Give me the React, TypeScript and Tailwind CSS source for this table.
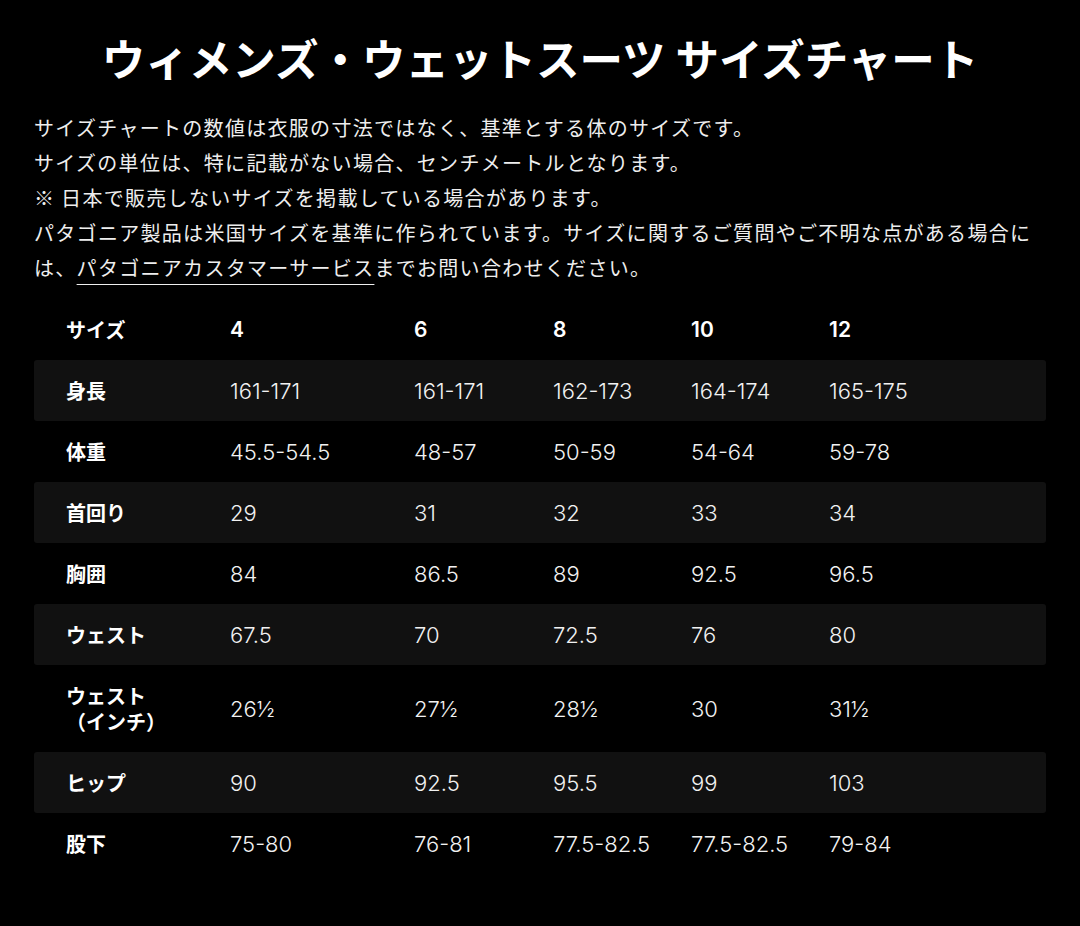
const HEADERS = ['4', '6', '8', '10', '12']

const ROWS: { label: string[]; values: string[] }[] = [
  { label: ['身長'], values: ['161-171', '161-171', '162-173', '164-174', '165-175'] },
  { label: ['体重'], values: ['45.5-54.5', '48-57', '50-59', '54-64', '59-78'] },
  { label: ['首回り'], values: ['29', '31', '32', '33', '34'] },
  { label: ['胸囲'], values: ['84', '86.5', '89', '92.5', '96.5'] },
  { label: ['ウェスト'], values: ['67.5', '70', '72.5', '76', '80'] },
  { label: ['ウェスト', '（インチ）'], values: ['26½', '27½', '28½', '30', '31½'] },
  { label: ['ヒップ'], values: ['90', '92.5', '95.5', '99', '103'] },
  { label: ['股下'], values: ['75-80', '76-81', '77.5-82.5', '77.5-82.5', '79-84'] },
]

const GRID = 'grid grid-cols-[196px_184px_139px_138px_138px_1fr] items-center'
const NUM_FONT = { fontFamily: 'Inter, "Noto Sans", sans-serif' }

export default function App() {
  return (
    <div
      className="min-h-[926px] w-[1080px] bg-black text-white"
      style={{ fontFamily: '"Noto Sans CJK JP", "Noto Sans", sans-serif' }}
    >
      <h1 className="pt-[22px] text-center text-[43.5px] font-bold leading-[72px]">
        ウィメンズ・ウェットスーツ サイズチャート
      </h1>

      <div className="mx-[34px] mt-[16px] text-[20px] leading-[35px] tracking-[0.065em] text-[#eeeeee]">
        <p>サイズチャートの数値は衣服の寸法ではなく、基準とする体のサイズです。</p>
        <p>サイズの単位は、特に記載がない場合、センチメートルとなります。</p>
        <p>※ 日本で販売しないサイズを掲載している場合があります。</p>
        <p>
          パタゴニア製品は米国サイズを基準に作られています。サイズに関するご質問やご不明な点がある場合には、
          <a className="underline decoration-1 underline-offset-[8px]">パタゴニアカスタマーサービス</a>
          までお問い合わせください。
        </p>
      </div>

      <div className="mx-[34px] mt-[14px]">
        <div className={`${GRID} py-[17.5px] text-[20px] font-bold leading-[26px]`}>
          <div className="pl-[32px]">サイズ</div>
          {HEADERS.map(h => (
            <div key={h} className="text-[21px] font-semibold" style={NUM_FONT}>
              {h}
            </div>
          ))}
        </div>
        {ROWS.map((row, i) => (
          <div
            key={i}
            className={`${GRID} rounded-[3px] py-[17.5px] ${i % 2 === 0 ? 'bg-[#111111]' : ''}`}
          >
            <div className="pl-[32px] text-[20px] font-bold leading-[26px]">
              {row.label.map(l => (
                <div key={l}>{l}</div>
              ))}
            </div>
            {row.values.map((v, j) => (
              <div
                key={j}
                className="text-[22px] font-light leading-[26px] text-[#f2f2f2]"
                style={NUM_FONT}
              >
                {v}
              </div>
            ))}
          </div>
        ))}
      </div>
    </div>
  )
}
